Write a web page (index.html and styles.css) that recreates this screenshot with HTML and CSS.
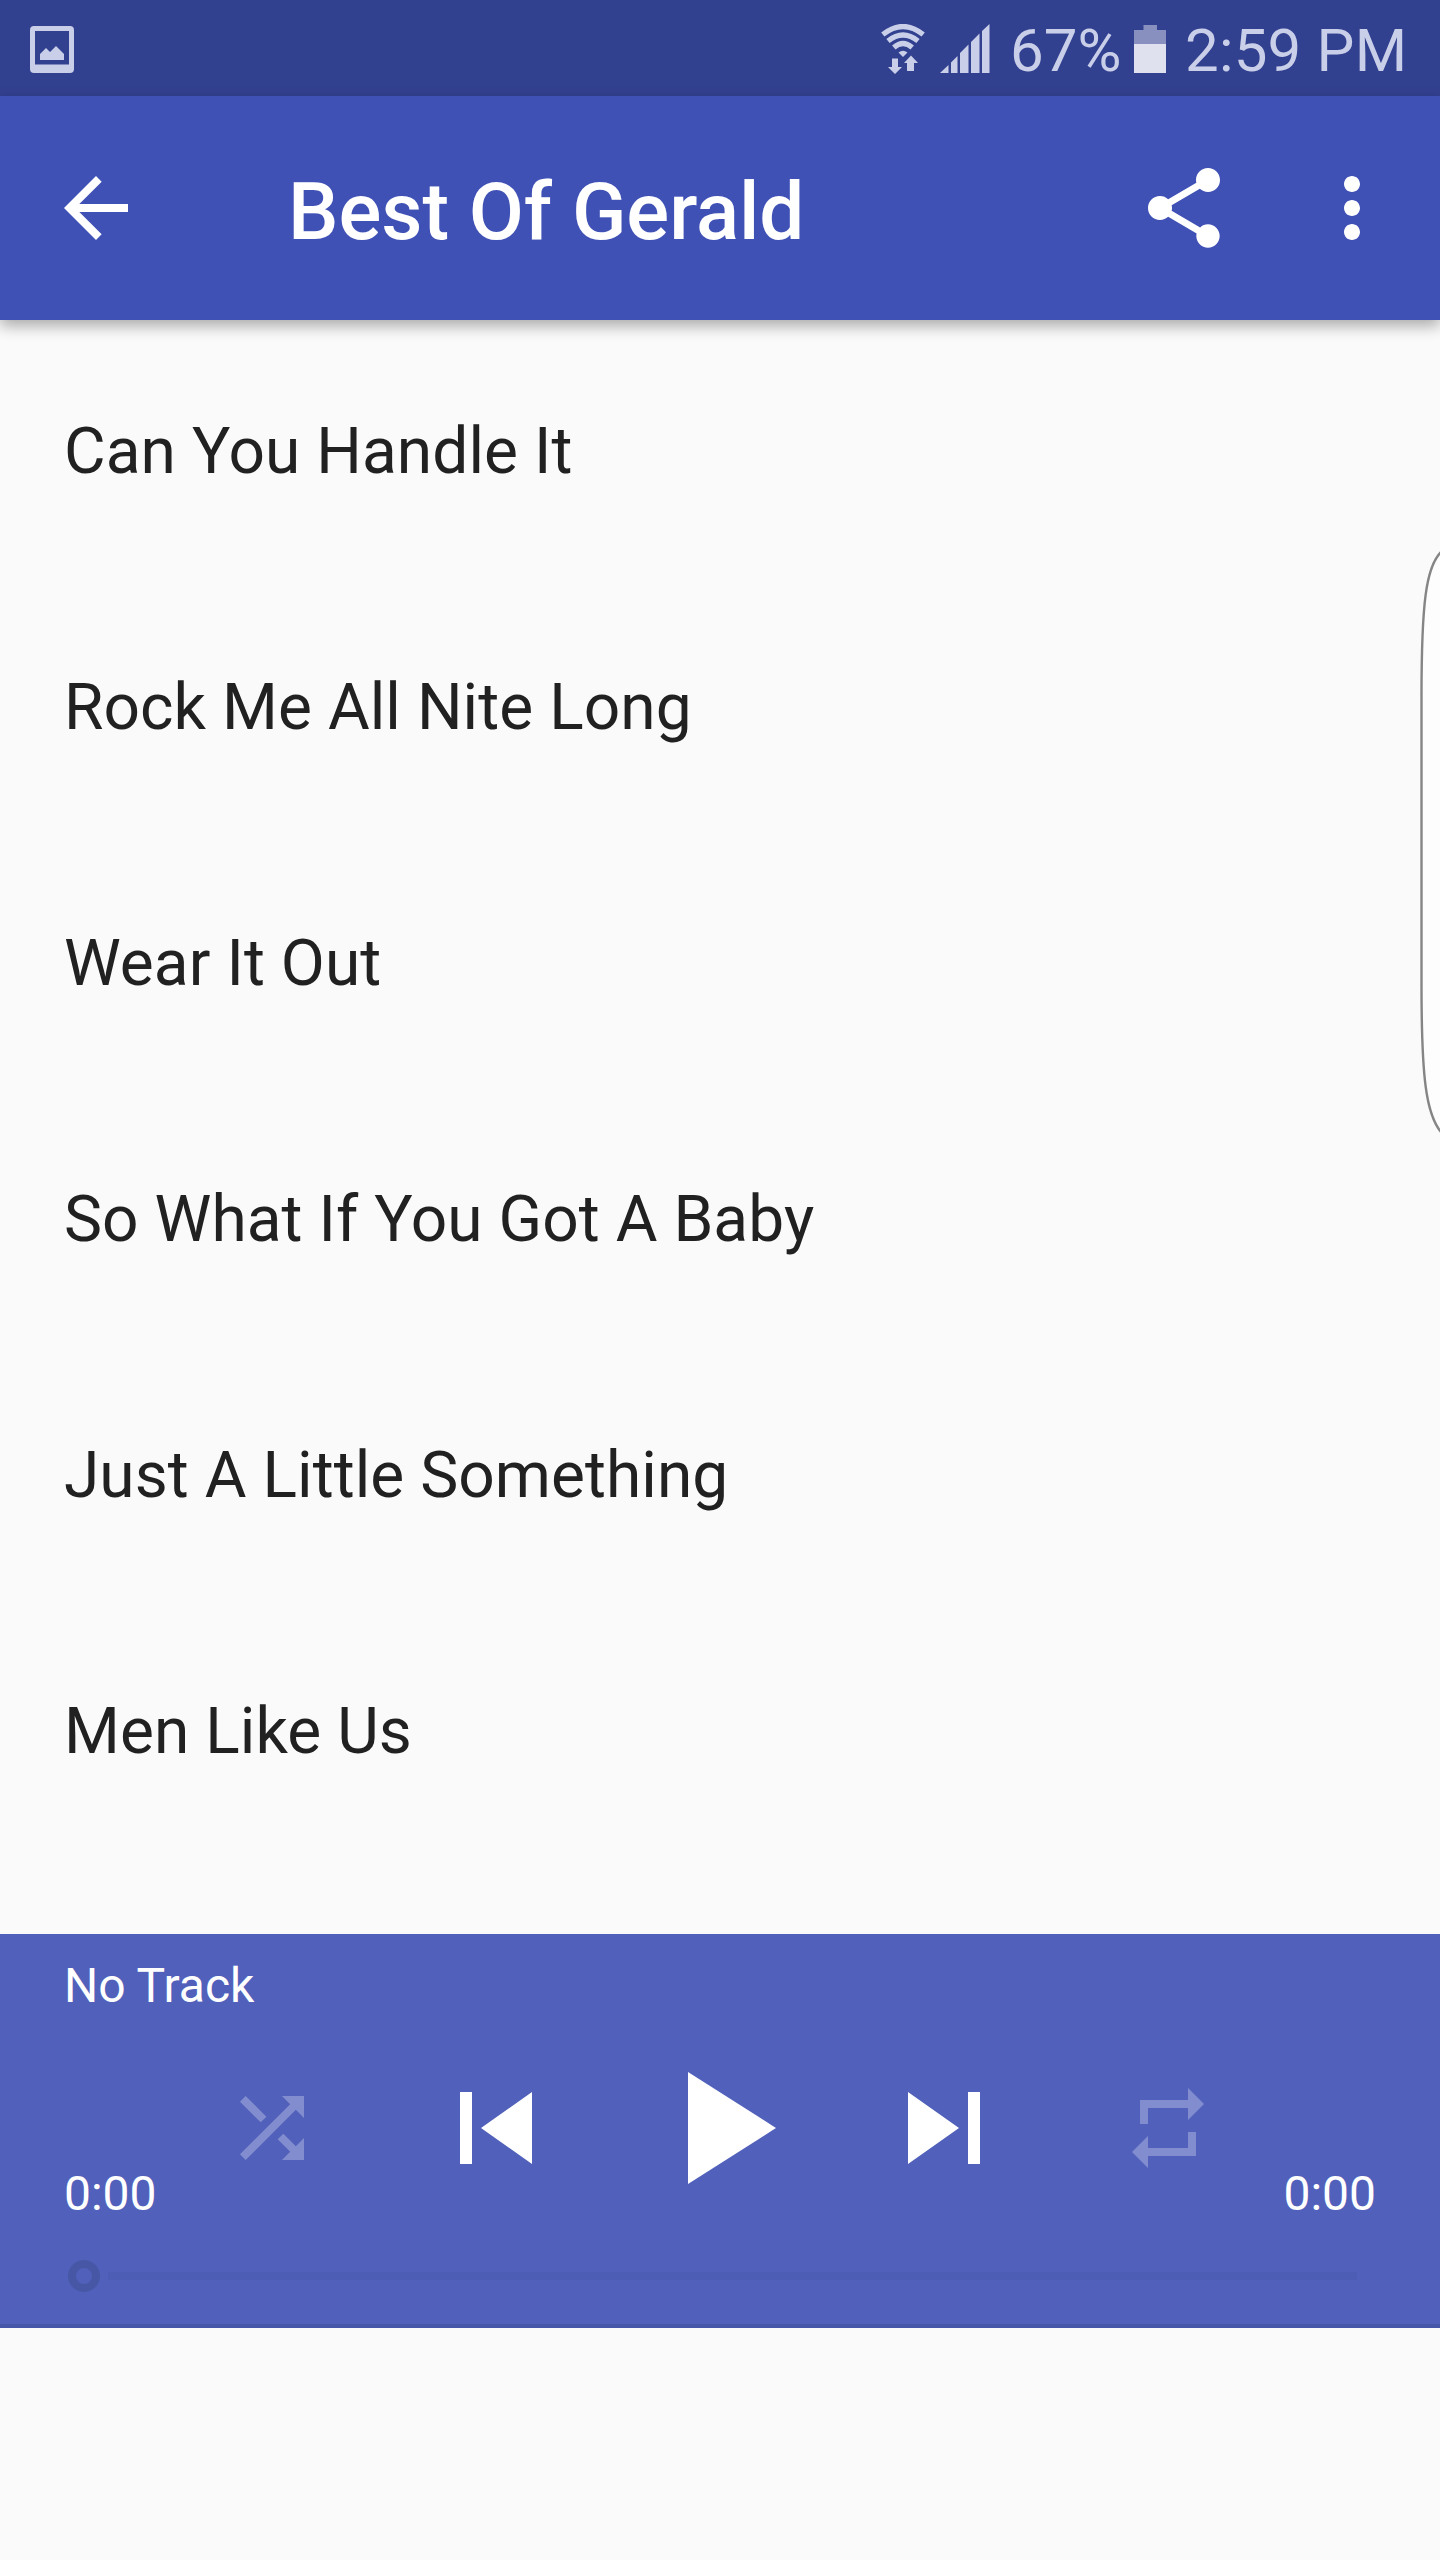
FILE: index.html
```html
<!DOCTYPE html>
<html lang="en">
<head>
    <meta charset="UTF-8">
    <meta name="viewport" content="width=device-width, initial-scale=1.0">
    <title>Best Of Gerald</title>
    <link rel="stylesheet" href="styles.css">
</head>
<body>
    <div class="status-bar">
        <svg class="picture-icon" viewBox="0 0 44 47">
            <path fill-rule="evenodd" d="M4 0H40Q44 0 44 4V43Q44 47 40 47H4Q0 47 0 43V4Q0 0 4 0ZM5 5V38.500H39V5Z"/>
            <path d="M10 34V28L16 22L20 26L26 20L34 28V34Z"/>
        </svg>
        <div class="status-right">
            <svg class="wifi-icon" viewBox="0 0 44 50">
                <g class="arcs">
                    <path d="M1.800 10.500Q22 -5.500 42.200 10.500"/>
                    <path d="M7 17Q22 5 37 17"/>
                    <path d="M12.800 23.500Q22 15.500 31.200 23.500"/>
                </g>
                <path d="M17.500 28.500Q22 25 26.500 28.500L22 33Z"/>
                <path d="M11 34.500H17V43H21L14 50L7 43H11Z"/>
                <path d="M26 47H33V39H37L30 31.500L23 39H26Z"/>
            </svg>
            <svg class="signal-icon" viewBox="0 0 50 49">
                <path d="M0 49L8.500 41V49ZM11 38.500L17.500 32V49H11ZM20 29L28.500 20.500V49H20ZM31 18L39.500 9.500V49H31ZM42 7L49.500 0V49H42Z"/>
            </svg>
            <span class="percent">67%</span>
            <svg class="battery-icon" viewBox="0 0 32 48">
                <path class="empty" d="M9.500 0H23V5H32V19H0V5H9.500Z"/>
                <path class="full" d="M0 19H32V48H0Z"/>
            </svg>
            <span class="clock">2:59 PM</span>
        </div>
    </div>

    <header class="toolbar">
        <svg class="icon" viewBox="0 0 24 24"><path d="M20 11H7.830l5.590-5.590L12 4l-8 8 8 8 1.410-1.410L7.830 13H20v-2z"/></svg>
        <h1>Best Of Gerald</h1>
        <svg class="icon share" viewBox="0 0 24 24"><path d="M18 16.080c-.76 0-1.440.3-1.960.77L8.910 12.700c.05-.23.09-.46.09-.7s-.04-.47-.09-.7l7.050-4.110c.54.5 1.250.81 2.040.81 1.660 0 3-1.340 3-3s-1.340-3-3-3-3 1.340-3 3c0 .24.04.47.09.7L8.040 9.810C7.500 9.310 6.790 9 6 9c-1.660 0-3 1.340-3 3s1.340 3 3 3c.79 0 1.500-.31 2.040-.81l7.120 4.160c-.05.21-.08.43-.08.65 0 1.610 1.310 2.920 2.920 2.920s2.920-1.310 2.920-2.920-1.310-2.920-2.920-2.920z"/></svg>
        <svg class="icon" viewBox="0 0 24 24"><path d="M12 8c1.100 0 2-.9 2-2s-.9-2-2-2-2 .9-2 2 .9 2 2 2zm0 2c-1.100 0-2 .9-2 2s.9 2 2 2 2-.9 2-2-.9-2-2-2zm0 6c-1.100 0-2 .9-2 2s.9 2 2 2 2-.9 2-2-.9-2-2-2z"/></svg>
    </header>

    <ul class="track-list">
        <li>Can You Handle It</li>
        <li>Rock Me All Nite Long</li>
        <li>Wear It Out</li>
        <li>So What If You Got A Baby</li>
        <li>Just A Little Something</li>
        <li>Men Like Us</li>
    </ul>

    <div class="player">
        <div class="track-name">No Track</div>
        <div class="controls">
            <span class="time">0:00</span>
            <div class="buttons">
                <svg class="small off" viewBox="0 0 24 24"><path d="M10.590 9.170L5.410 4 4 5.410l5.170 5.170 1.420-1.410zM14.500 4l2.040 2.040L4 18.590 5.410 20 17.960 7.460 20 9.500V4h-5.500zm.33 9.410l-1.410 1.410 3.130 3.130L14.500 20H20v-5.500l-2.040 2.040-3.130-3.130z"/></svg>
                <svg class="medium" viewBox="0 0 24 24"><path d="M6 6h2v12H6zm3.500 6l8.500 6V6z"/></svg>
                <svg class="large" viewBox="0 0 24 24"><path d="M8 5v14l11-7z"/></svg>
                <svg class="medium" viewBox="0 0 24 24"><path d="M6 18l8.500-6L6 6v12zM16 6v12h2V6h-2z"/></svg>
                <svg class="small off" viewBox="0 0 24 24"><path d="M7 7h10v3l4-4-4-4v3H5v6h2V7zm10 10H7v-3l-4 4 4 4v-3h12v-6h-2v4z"/></svg>
            </div>
            <span class="time end">0:00</span>
        </div>
        <div class="seekbar">
            <span class="thumb"></span>
            <span class="line"></span>
        </div>
    </div>

    <!-- edge panel handle over the list -->
    <svg class="edge-panel" viewBox="0 0 20 584">
        <path d="M21 1C6 16 1.500 52 1.500 146V434C1.500 526 6 563 21 581"/>
    </svg>
</body>
</html>
```

FILE: styles.css
```css
* {
    margin: 0;
    padding: 0;
    box-sizing: border-box;
}

body {
    position: relative;
    width: 1440px;
    height: 2560px;
    overflow: hidden;
    background: #fafafa;
    font-family: Roboto, sans-serif;
}

svg {
    display: block;
    flex: none;
}

/* Status bar */
.status-bar {
    display: flex;
    justify-content: space-between;
    height: 96px;
    padding: 0 34px 0 30px;
    background: #324090;
    color: #c9cfe8;
    fill: #c9cfe8;
}

.picture-icon {
    width: 44px;
    height: 47px;
    margin-top: 25.5px;
}

.status-right {
    display: flex;
    align-items: flex-start;
    font-size: 60px;
    line-height: 102px;
    white-space: nowrap;
}

.wifi-icon {
    width: 44px;
    height: 50px;
    margin: 24px 15px 0 0;
}

.arcs {
    fill: none;
    stroke: #c9cfe8;
    stroke-width: 5.2;
}

.signal-icon {
    width: 50px;
    height: 49px;
    margin: 24px 20px 0 0;
}

.percent {
    width: 124px;
}

.battery-icon {
    width: 32px;
    height: 48px;
    margin: 25px 19px 0 0;
}

.empty {
    fill: #8890c0;
}

.full {
    fill: #dfe1ef;
}

.clock {
    width: 221px;
    letter-spacing: 0.2px;
}

/* Toolbar */
.toolbar {
    position: relative;
    display: flex;
    align-items: center;
    height: 224px;
    padding: 0 40px 0 48px;
    background: #3f51b5;
    box-shadow: 0 6px 14px rgba(0, 0, 0, 0.32);
}

.toolbar h1 {
    flex: 1;
    padding: 8px 0 0 144px;
    color: #fff;
    font-size: 80px;
    font-weight: 500;
    letter-spacing: -0.05px;
    line-height: 94px;
}

.icon {
    width: 96px;
    height: 96px;
    fill: #fff;
}

.share {
    margin-right: 72px;
}

/* Track list */
.track-list {
    height: 1614px;
    list-style: none;
}

.track-list li {
    height: 256px;
    padding: 4px 64px 0;
    color: #212121;
    font-size: 64px;
    letter-spacing: 0.06px;
    line-height: 256px;
}

/* Player */
.player {
    height: 394px;
    padding: 24px 64px 0;
    border-bottom: 4px solid #4656a8;
    background: #5161bb;
    color: #fff;
}

.track-name {
    height: 74px;
    font-size: 48px;
    line-height: 56px;
}

.controls {
    display: flex;
    justify-content: space-between;
    align-items: flex-end;
    height: 192px;
}

.time {
    width: 94px;
    padding-bottom: 2px;
    font-size: 48px;
    line-height: 56px;
}

.end {
    text-align: right;
}

.buttons {
    display: grid;
    grid-template-columns: repeat(5, 224px);
    align-items: center;
    justify-items: center;
    fill: #fff;
}

.small {
    width: 96px;
    height: 96px;
}

.medium {
    width: 144px;
    height: 144px;
}

.large {
    width: 192px;
    height: 192px;
}

.off {
    opacity: 0.28;
}

.seekbar {
    display: flex;
    align-items: center;
    gap: 8px;
    height: 104px;
    padding: 0 19px 0 4px;
}

.thumb {
    width: 32px;
    height: 32px;
    border: 8px solid #4757a6;
    border-radius: 50%;
}

.line {
    flex: 1;
    height: 8px;
    background: #4d5db5;
}

/* Edge panel */
.edge-panel {
    position: absolute;
    top: 551px;
    right: 0;
    width: 20px;
    height: 584px;
    fill: #fdfdfd;
    stroke: #858585;
    stroke-width: 2.4;
}
```
